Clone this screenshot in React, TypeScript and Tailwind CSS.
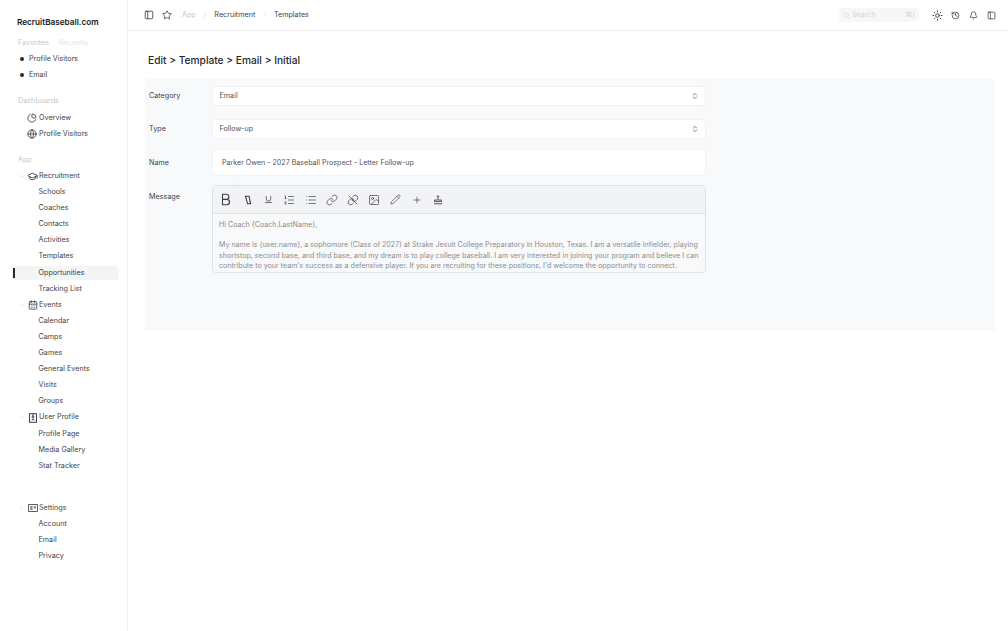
import React from "react";
import {
  Bell,
  CalendarDays,
  ChartPie,
  ChevronDown,
  ChevronRight,
  ChevronsUpDown,
  Globe,
  GraduationCap,
  History,
  Image,
  Link,
  List,
  ListOrdered,
  PanelLeft,
  Pencil,
  Plus,
  Search,
  Star,
  Sun,
  Underline,
} from "lucide-react";

const font = "font-['Inter','Liberation_Sans',sans-serif]";

const SettingsIcon = () => (
  <svg width="10" height="10" viewBox="0 0 12 12" fill="none" stroke="currentColor" strokeWidth="1">
    <rect x="0.75" y="1.75" width="10.5" height="8.5" />
    <path d="M2.5 4.5h3M2.5 6h3M2.5 7.5h3M7 4.5h2.5M7 6h2.5" />
  </svg>
);

const ProfileIcon = () => (
  <svg width="10" height="10" viewBox="0 0 10 10" fill="none" stroke="currentColor" strokeWidth="1">
    <rect x="1.5" y="0.7" width="7" height="8.6" />
    <circle cx="5" cy="4" r="1" />
    <path d="M3.4 7.4c.3-1.2 2.9-1.2 3.2 0M4 2h2" />
  </svg>
);

const BoldIcon = () => (
  <svg width="10" height="13" viewBox="0 0 10 13" fill="none" stroke="#3f3f46" strokeWidth="1.1">
    <path d="M1.500 1.200h3.800a2.600 2.600 0 0 1 0 5.200H1.500zM1.500 6.400h4.300a2.700 2.700 0 0 1 0 5.400H1.500z" />
  </svg>
);

const ItalicIcon = () => (
  <svg width="10" height="10" viewBox="0 0 10 10" fill="none" stroke="#3f3f46" strokeWidth="1.1">
    <path d="M2.5 1.2h3.600l1.400 7.600H4.600z" />
  </svg>
);

const UnlinkIcon = () => (
  <svg width="12" height="12" viewBox="0 0 24 24" fill="none" stroke="#3f3f46" strokeWidth="1.5" strokeLinecap="round" strokeLinejoin="round">
    <path d="M10 13a5 5 0 0 0 7.500.5l3-3a5 5 0 0 0-7-7l-1.700 1.700" />
    <path d="M14 11a5 5 0 0 0-7.500-.5l-3 3a5 5 0 0 0 7 7l1.700-1.700" />
    <path d="M4 4l16 16" />
  </svg>
);

const StampIcon = () => (
  <svg width="10" height="10" viewBox="0 0 10 10" fill="none" stroke="#3f3f46" strokeWidth="0.9">
    <path d="M5 1v3.500M3.800 1.200h2.400" />
    <path d="M1.500 5h7v1.600h-7z" />
    <path d="M1 8.800h8" />
  </svg>
);

const SubItem = ({ label, active }: { label: string; active?: boolean }) => (
  <div className="relative h-[16.1px] flex items-center">
    {active && <div className="absolute left-[12.5px] top-[3px] w-[2px] h-[10px] bg-[#27272a]" />}
    <div className={`ml-[12px] mr-[8px] w-full h-[14px] flex items-center rounded-[4px] pl-[26.5px] ${active ? "bg-[#f4f4f5]" : ""}`}>
      {label}
    </div>
  </div>
);

const NavGroup = ({
  label,
  icon,
  open = true,
}: {
  label: string;
  icon: React.ReactNode;
  open?: boolean;
}) => (
  <div className="h-[16.1px] flex items-center pl-[18px]">
    <span className="w-[9px] text-[#d4d4d8]">
      {open ? <ChevronDown size={7} /> : <ChevronRight size={7} />}
    </span>
    <span className="w-[11px] flex justify-center text-[#3f3f46]">{icon}</span>
    <span className="ml-[1px]">{label}</span>
  </div>
);

const Sidebar = () => (
  <aside className="w-[128px] shrink-0 min-h-[631px] border-r border-[#f0f0f2] text-[7.2px] text-[#3f3f46]">
    <div className="pl-[17px] pt-[16px] h-[36px] text-[8.2px] font-semibold text-[#18181b]">RecruitBaseball.com</div>
    <div className="pl-[18px] h-[15px] flex items-center gap-[10px] text-[#c7c7cc]">
      <span>Favorites</span>
      <span className="text-[#e4e4e7]">Recently</span>
    </div>
    {["Profile Visitors", "Email"].map((t) => (
      <div key={t} className="h-[16.1px] flex items-center pl-[20px]">
        <span className="w-[3.500px] h-[3.500px] rounded-full bg-[#27272a] mr-[5.500px]" />
        {t}
      </div>
    ))}
    <div className="pl-[18px] mt-[10px] mb-[1px] h-[16px] flex items-center text-[#c7c7cc]">Dashboards</div>
    <div className="h-[16.1px] flex items-center pl-[27px] gap-[2px]">
      <ChartPie size={10} />
      Overview
    </div>
    <div className="h-[16.1px] flex items-center pl-[27px] gap-[2px]">
      <Globe size={10} />
      Profile Visitors
    </div>
    <div className="pl-[18px] mt-[10px] h-[16px] flex items-center text-[#c7c7cc]">App</div>
    <NavGroup label="Recruitment" icon={<GraduationCap size={11} />} />
    {["Schools", "Coaches", "Contacts", "Activities", "Templates"].map((t) => (
      <SubItem key={t} label={t} />
    ))}
    <SubItem label="Opportunities" active />
    <SubItem label="Tracking List" />
    <NavGroup label="Events" icon={<CalendarDays size={10} />} />
    {["Calendar", "Camps", "Games", "General Events", "Visits", "Groups"].map((t) => (
      <SubItem key={t} label={t} />
    ))}
    <NavGroup label="User Profile" icon={<ProfileIcon />} />
    {["Profile Page", "Media Gallery", "Stat Tracker"].map((t) => (
      <SubItem key={t} label={t} />
    ))}
    <div className="h-[26px]" />
    <NavGroup label="Settings" icon={<SettingsIcon />} open={false} />
    {["Account", "Email", "Privacy"].map((t) => (
      <SubItem key={t} label={t} />
    ))}
  </aside>
);

const Header = () => (
  <header className="h-[31px] border-b border-[#f0f0f2] flex items-center pl-[16px] pr-[12px] text-[7.2px] text-[#3f3f46]">
    <PanelLeft size={10} className="mr-[8px]" />
    <Star size={10} className="mr-[10px]" />
    <span className="text-[#c7c7cc]">App</span>
    <span className="mx-[8px] text-[#e4e4e7]">/</span>
    <span>Recruitment</span>
    <span className="mx-[8px] text-[#e4e4e7]">/</span>
    <span>Templates</span>
    <div className="ml-auto w-[80px] h-[14px] rounded-[4px] bg-[#f7f7f8] flex items-center px-[4px] text-[#d4d4d8]">
      <Search size={7} className="mr-[2px]" />
      <span>Search</span>
      <span className="ml-auto">⌘/</span>
    </div>
    <Sun size={11} className="ml-[13px]" />
    <History size={9} className="ml-[8px]" />
    <Bell size={9} className="ml-[9px]" />
    <PanelLeft size={9} className="ml-[9px] mr-[4px]" />
  </header>
);

const SelectField = ({ label, value }: { label: string; value: string }) => (
  <div className="flex items-center">
    <div className="w-[63px] text-[#3f3f46]">{label}</div>
    <div className="w-[494px] h-[20px] rounded-[4px] bg-white border border-[#f3f3f5] flex items-center pl-[6.500px] pr-[6px] text-[#52525b]">
      {value}
      <ChevronsUpDown size={8} className="ml-auto text-[#3f3f46]" />
    </div>
  </div>
);

const Toolbar = () => (
  <div className="h-[28px] bg-[#f2f3f5] border-b border-[#dfe1e5] flex items-center pl-[8px] text-[#3f3f46]">
    <BoldIcon />
    <span className="ml-[11.500px] flex"><ItalicIcon /></span>
    <Underline size={9} className="ml-[11px]" />
    <ListOrdered size={12} strokeWidth={1.4} className="ml-[10px]" />
    <List size={12} strokeWidth={1.4} className="ml-[10px]" />
    <Link size={12} strokeWidth={1.4} className="ml-[9px]" />
    <span className="ml-[9px] flex"><UnlinkIcon /></span>
    <Image size={12} strokeWidth={1.4} className="ml-[9px]" />
    <Pencil size={11} strokeWidth={1.4} className="ml-[10px]" />
    <Plus size={10} strokeWidth={1.6} className="ml-[11px]" />
    <span className="ml-[11px] flex"><StampIcon /></span>
  </div>
);

const Form = () => (
  <div className="mx-[17px] mt-[12px] w-[850px] h-[252px] bg-[#f8f9fb] pl-[4px] pt-[7px] text-[7.2px]">
    <SelectField label="Category" value="Email" />
    <div className="h-[13px]" />
    <SelectField label="Type" value="Follow-up" />
    <div className="flex items-center mt-[10px]">
      <div className="w-[63px] pt-[1px] text-[#3f3f46]">Name</div>
      <div className="w-[494px] h-[27px] pt-[1px] rounded-[4px] bg-white border border-[#f3f3f5] flex items-center pl-[9px] text-[7.1px] text-[#52525b]">
        Parker Owen - 2027 Baseball Prospect - Letter Follow-up
      </div>
    </div>
    <div className="flex mt-[9px]">
      <div className="w-[63px] pt-[7px] text-[#3f3f46]">Message</div>
      <div className="relative w-[494px] h-[88px] rounded-[4px] border border-[#dfe1e5]">
        <div className="absolute left-[26px] top-[-3px] w-[1px] h-[2px] bg-[#e4e4e7]" />
        <Toolbar />
        <div className="px-[6px] pt-[6px] text-[7.1px] text-[#8c8c8c] leading-[10.2px] whitespace-nowrap">
          <p>Hi Coach {"{Coach.LastName}"},</p>
          <p className="mt-[10.2px]">
            My name is {"{user.name}"}, a sophomore (Class of 2027) at Strake Jesuit College Preparatory in Houston, Texas. I am a versatile infielder, playing
            <br />
            shortstop, second base, and third base, and my dream is to play college baseball. I am very interested in joining your program and believe I can
            <br />
            contribute to your team's success as a defensive player. If you are recruiting for these positions, I'd welcome the opportunity to connect.
          </p>
        </div>
      </div>
    </div>
  </div>
);

export default function App() {
  return (
    <div className={`flex min-h-[631px] bg-white ${font}`}>
      <Sidebar />
      <main className="flex-1">
        <Header />
        <h1 className="mt-[23px] ml-[20px] text-[10.2px] leading-[13px] font-medium text-[#27272a]">Edit &gt; Template &gt; Email &gt; Initial</h1>
        <Form />
      </main>
    </div>
  );
}
